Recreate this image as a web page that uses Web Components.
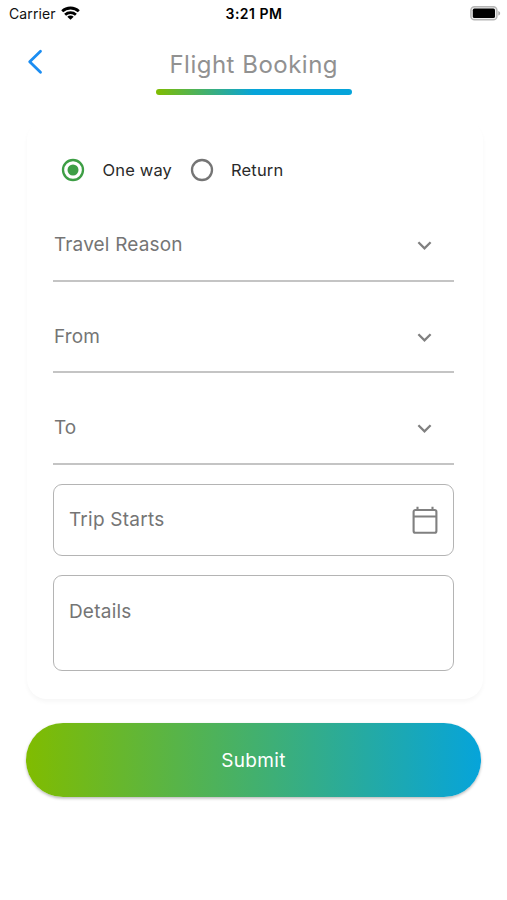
<!DOCTYPE html>
<html lang="en">
<head>
<meta charset="utf-8">
<title>Flight Booking</title>
<style>
html,body{margin:0;background:#fff}
body{font-family:Inter,"Liberation Sans",sans-serif;color:#757575}
</style>
</head>
<body>
<flight-app></flight-app>
<script>
function define(name, html) {
  const t = document.createElement('template');
  t.innerHTML = html;
  customElements.define(name, class extends HTMLElement {
    constructor() {
      super();
      this.attachShadow({mode: 'open'}).appendChild(t.content.cloneNode(true));
    }
  });
}

define('status-bar', `
<style>
:host{display:grid;grid-template-columns:1fr auto 1fr;align-items:center;height:27px;padding:0 6px 0 9px;box-sizing:border-box;color:#111;font-size:14px;line-height:27px;white-space:nowrap}
.left{display:flex;align-items:center;gap:5.5px;letter-spacing:.1px}
.time{font-weight:600;font-size:14px;letter-spacing:.5px;color:#000;padding-right:2px}
.right{display:flex;justify-content:flex-end}
svg{display:block}
.left svg{margin-top:-1px}
</style>
<div class="left"><span>Carrier</span>
<svg width="19" height="14" viewBox="0 0 19 14" fill="none" stroke="#000" stroke-width="2.8"><path d="M1.2 5.2C5.8.9 13.2.9 17.8 5.2"/><path d="M4.1 8.7c3.1-2.8 7.7-2.8 10.8 0"/><path d="M9.5 13.8 6.3 10.7c1.7-1.6 4.7-1.6 6.4 0z" fill="#000" stroke="none"/></svg></div>
<div class="time">3:21 PM</div>
<div class="right"><svg width="31" height="15" viewBox="0 0 31 15"><rect x=".9" y=".8" width="26" height="13" rx="3.6" fill="#eee" stroke="#b5b5b5" stroke-width="1.5"/><rect x="2.8" y="2.6" width="22.2" height="9.4" rx="1.6" fill="#000"/><path d="M28.3 5v4.6c2.5-.8 2.5-3.8 0-4.6z" fill="#aaa"/></svg></div>`);

define('page-header', `
<style>
:host{display:grid;grid-template-columns:156px 195.5px 1fr;height:93px;box-sizing:border-box;padding-top:21px}
.back{padding:1px 0 0 27px}
svg{display:block}
.title{text-align:center;font-size:24px;line-height:34px;letter-spacing:.5px;color:#919191;white-space:nowrap}
.bar{height:5.5px;margin-top:7px;border-radius:3px;background:linear-gradient(90deg,#80bc00,#06a4da 50%)}
</style>
<div class="back"><svg width="17" height="26" viewBox="0 0 17 26" fill="none" stroke="#1b8df2" stroke-width="2.8" stroke-linecap="round" stroke-linejoin="round"><path d="M13.5 2.2 2.7 12.7l10.8 10.6"/></svg></div>
<div><div class="title"><slot></slot></div><div class="bar"></div></div>`);

define('radio-option', `
<style>
:host{display:flex;align-items:center;font-size:16.5px;line-height:24px;color:#2a2a2a;white-space:nowrap}
svg{display:block;margin-right:17.5px}
.dot{display:none}
circle{stroke:#757575}
:host([checked]) circle{stroke:#3d9e45}
:host([checked]) .dot{display:block;fill:#3d9e45;stroke:none}
</style>
<svg width="24" height="24" viewBox="0 0 24 24" fill="none"><circle cx="12" cy="12" r="10" stroke-width="2.3"/><circle class="dot" cx="12" cy="12" r="5.5"/></svg>
<span><slot></slot></span>`);

define('select-field', `
<style>
:host{display:flex;justify-content:space-between;box-sizing:border-box;height:91.5px;padding:41px 21px 0 .5px;border-bottom:2px solid #c4c4c4;font-size:19px;line-height:28px;letter-spacing:.17px}
svg{display:block;margin-top:8px}
</style>
<span><slot></slot></span>
<svg width="17" height="14" viewBox="0 0 17 14" fill="none" stroke="#808080" stroke-width="2.3"><path d="m2.4 3.2 6.1 6.1 6.1-6.1"/></svg>`);

define('text-box', `
<style>
:host{display:flex;justify-content:space-between;box-sizing:border-box;height:72px;padding:21px 15px 0 14.5px;border:1.5px solid #b4b4b4;border-radius:9px;font-size:19px;line-height:28px;letter-spacing:.25px}
:host([multiline]){height:96px;padding-top:21.5px}
</style>
<span><slot></slot></span><slot name="icon"></slot>`);

define('calendar-icon', `
<style>:host{display:block}svg{display:block}</style>
<svg width="26" height="29" viewBox="0 0 26 29" fill="none" stroke="#808080" stroke-width="2.1"><rect x="1.6" y="4" width="22.8" height="22.7" rx="1.8"/><path d="M1.6 10.5h22.8M5.5.8v3M20.5.8v3"/></svg>`);

define('form-card', `
<style>
:host{display:block;box-sizing:border-box;margin:0 24px 0 27px;height:579px;padding:37px 29px 0 26.4px;border-radius:20px;background:#fff;box-shadow:0 3px 4px rgba(0,0,0,.035)}
</style><slot></slot>`);

define('submit-button', `
<style>
:host{display:flex;align-items:center;justify-content:center;margin:24px 26px 0;height:74px;border-radius:37px;background:linear-gradient(90deg,#80bc00,#06a4da);box-shadow:0 1.5px 3px rgba(0,0,0,.28);color:#fff;font-size:19px;letter-spacing:.3px}
</style><span><slot></slot></span>`);

define('flight-app', `
<style>
:host{display:block;height:900px;overflow:hidden;background:#fff}
.radios{display:flex;height:26px;padding-left:7.6px;align-items:center;gap:17.5px}
.radios radio-option{letter-spacing:.16px}
.selects{padding-top:7px}
.boxes{display:flex;flex-direction:column;gap:19.5px;padding-top:19px}
</style>
<status-bar></status-bar>
<page-header>Flight Booking</page-header>
<form-card>
<div class="radios"><radio-option checked>One way</radio-option><radio-option>Return</radio-option></div>
<div class="selects"><select-field>Travel Reason</select-field><select-field>From</select-field><select-field>To</select-field></div>
<div class="boxes"><text-box>Trip Starts<calendar-icon slot="icon"></calendar-icon></text-box><text-box multiline>Details</text-box></div>
</form-card>
<submit-button>Submit</submit-button>`);
</script>
</body>
</html>
